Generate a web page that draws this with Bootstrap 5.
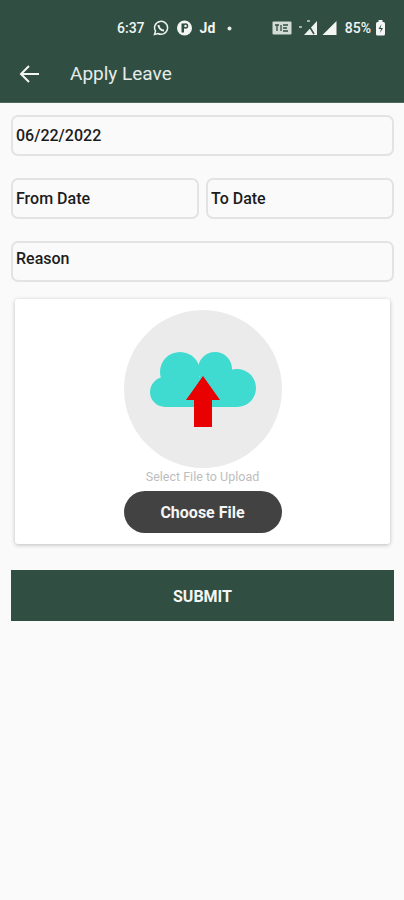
<!DOCTYPE html>
<html lang="en">
<head>
    <meta charset="UTF-8">
    <meta name="viewport" content="width=device-width, initial-scale=1.0">
    <title>Apply Leave</title>
    <link href="https://cdn.jsdelivr.net/npm/bootstrap@5.3.0/dist/css/bootstrap.min.css" rel="stylesheet">
    <style>
        body {
            background-color: #fafafa;
            font-family: Roboto, "Liberation Sans", sans-serif;
            height: 900px;
            overflow: hidden;
        }
        .app-head {
            background-color: #304f42;
            height: 103px;
            color: #f2f5f3;
            border-bottom: 1px solid #4d6a5d;
        }
        .status-row {
            height: 56px;
            padding-left: 117px;
            padding-right: 18px;
            font-size: 14px;
            font-weight: 500;
        }
        .jd-dot {
            margin-left: 12px;
        }
        .net-icon {
            margin-left: 6px;
        }
        .title-row {
            padding-left: 19px;
            height: 36px;
        }
        .title-text {
            font-size: 19px;
            margin-left: 30px;
            color: #e6ece9;
        }
        .form-area {
            padding: 12px 10px 0 11px;
        }
        .field-box {
            height: 41px;
            border: 2px solid #e2e3e2;
            border-radius: 7px;
            background-color: #fafafa;
            color: #1c1c1c;
            font-size: 16px;
            font-weight: 500;
            padding-left: 3px;
            display: flex;
            align-items: center;
        }
        .field-pair {
            gap: 7px;
        }
        .field-top {
            align-items: flex-start;
            padding-top: 4px;
        }
        .field-gap {
            margin-top: 22px;
        }
        .upload-panel {
            margin: 17px 4px 0 4px;
            height: 245px;
            background-color: #fff;
            border-radius: 3px;
            box-shadow: 0 1px 4px rgba(0,0,0,0.25);
            padding-top: 11px;
        }
        .upload-circle {
            width: 158px;
            height: 158px;
            border-radius: 50%;
            background-color: #ebebeb;
            padding-top: 1px;
        }
        .upload-hint {
            font-size: 12.5px;
            line-height: 18px;
            color: #bdbdbd;
        }
        .choose-btn {
            width: 158px;
            height: 42px;
            border-radius: 21px;
            background-color: #424242;
            color: #f5f5f5;
            border: none;
            font-size: 16px;
            font-weight: 700;
            margin-top: 5px;
            padding: 2px 0 0;
        }
        .choose-btn:hover { background-color: #424242; color: #f5f5f5; }
        .submit-btn {
            display: block;
            width: 100%;
            height: 51px;
            margin-top: 26px;
            border-radius: 0;
            border: none;
            background-color: #304f42;
            color: #f5f5f5;
            font-size: 16px;
            font-weight: 700;
            padding: 2px 0 0;
        }
        .submit-btn:hover { background-color: #304f42; color: #f5f5f5; }
    </style>
</head>
<body>
    <div class="app-head">
        <div class="status-row d-flex align-items-center">
            <span>6:37</span>
            <svg class="ms-2" width="16" height="16" viewBox="0 0 16 16" fill="none" stroke="#eef2ef" stroke-width="1.5">
                <path d="M1.5 14.5l1-3.4A6.5 6.5 0 1 1 5 13.5z"/>
                <path d="M5.5 5c0 3 2.500 5.500 5.500 5.500" stroke-width="2"/>
            </svg>
            <svg class="ms-2" width="15" height="16" viewBox="0 0 15 16">
                <circle cx="7.500" cy="8" r="7.500" fill="#f4f6f5"/>
                <rect x="4.500" y="3.500" width="2.500" height="9" fill="#304f42"/>
                <circle cx="8.500" cy="6" r="2" fill="none" stroke="#304f42" stroke-width="1.500"/>
            </svg>
            <span class="ms-2 fw-bold">Jd</span>
            <svg class="jd-dot" width="5" height="5" viewBox="0 0 5 5"><circle cx="2.500" cy="2.500" r="2" fill="#e6ece9"/></svg>
            <svg class="ms-auto" width="20" height="14" viewBox="0 0 20 14">
                <rect x="0.500" y="0.500" width="19" height="13" rx="1" fill="#d3dbd7"/>
                <path d="M3 4h4M5 4v6M9 4v6M11 4h5M11 7h4M11 10h5" stroke="#304f42" stroke-width="1.300" fill="none"/>
            </svg>
            <svg class="net-icon" width="20" height="16" viewBox="0 0 20 16">
                <path d="M19 1v14H6z" fill="#eef2ef"/>
                <path d="M8 1l8 13" stroke="#304f42" stroke-width="1.500"/>
                <path d="M1 7h3M9 1h3" stroke="#c8d2cd" stroke-width="1.500"/>
            </svg>
            <svg class="ms-1" width="15" height="16" viewBox="0 0 15 16">
                <path d="M14.500 1v14H0.500z" fill="#f4f6f5"/>
            </svg>
            <span class="ms-2">85%</span>
            <svg class="ms-1" width="11" height="16" viewBox="0 0 11 16">
                <rect x="3.500" y="0" width="4" height="2" fill="#f4f6f5"/>
                <rect x="1" y="2" width="9" height="13.500" rx="1.500" fill="#f4f6f5"/>
                <path d="M6.500 4L3.500 9h2.500l-1 4 3-5H5.500z" fill="#304f42"/>
            </svg>
        </div>
        <div class="title-row d-flex align-items-center">
            <svg width="21" height="18" viewBox="0 0 21 18" fill="none" stroke="#f4f6f5" stroke-width="2">
                <path d="M20 9H2M10 1L2 9l8 8"/>
            </svg>
            <span class="title-text">Apply Leave</span>
        </div>
    </div>

    <div class="form-area">
        <div class="field-box">06/22/2022</div>
        <div class="d-flex field-pair field-gap">
            <div class="field-box flex-fill w-50">From Date</div>
            <div class="field-box flex-fill w-50">To Date</div>
        </div>
        <div class="field-box field-top field-gap">Reason</div>

        <div class="upload-panel d-flex flex-column align-items-center">
            <div class="upload-circle d-flex align-items-center justify-content-center">
                <svg width="106" height="75" viewBox="0 0 106 75">
                    <g fill="#3fdad0">
                        <circle cx="30" cy="20" r="20"/>
                        <circle cx="65" cy="17" r="17"/>
                        <circle cx="87" cy="36" r="19"/>
                        <circle cx="15" cy="40" r="15"/>
                        <rect x="15" y="25" width="72" height="30"/>
                    </g>
                    <path d="M53 24l17 24H62v27H44V48H36z" fill="#e90000"/>
                </svg>
            </div>
            <div class="upload-hint">Select File to Upload</div>
            <button type="button" class="btn choose-btn">Choose File</button>
        </div>

        <button type="button" class="btn submit-btn">SUBMIT</button>
    </div>
</body>
</html>
